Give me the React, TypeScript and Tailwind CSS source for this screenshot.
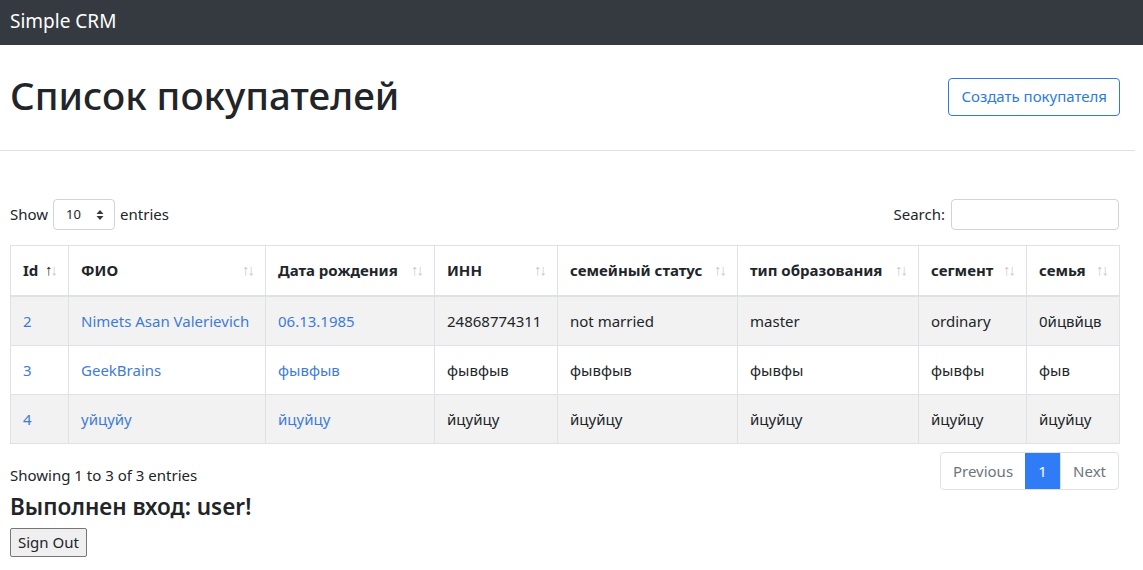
import React from "react"

const font = { fontFamily: '"Noto Sans", "Open Sans", Arial, sans-serif' }

const columns = [
  { title: "Id", w: "w-[58px]" },
  { title: "ФИО", w: "w-[197px]" },
  { title: "Дата рождения", w: "w-[169px]" },
  { title: "ИНН", w: "w-[123px]" },
  { title: "семейный статус", w: "w-[180px]" },
  { title: "тип образования", w: "w-[181px]" },
  { title: "сегмент", w: "w-[108px]" },
  { title: "семья", w: "w-[93px]" },
]

const rows = [
  ["2", "Nimets Asan Valerievich", "06.13.1985", "24868774311", "not married", "master", "ordinary", "0йцвйцв"],
  ["3", "GeekBrains", "фывфыв", "фывфыв", "фывфыв", "фывфы", "фывфы", "фыв"],
  ["4", "уйцуйу", "йцуйцу", "йцуйцу", "йцуйцу", "йцуйцу", "йцуйцу", "йцуйцу"],
]

function SortArrows({ active }: { active?: boolean }) {
  return (
    <span className="absolute right-[10px] top-1/2 -translate-y-[55%] flex text-[15px] leading-none font-normal">
      <span className={active ? "text-[#212529]" : "text-[#c8c9ca]"}>↑</span>
      <span className="text-[#c8c9ca] -ml-[2px]">↓</span>
    </span>
  )
}

export default function App() {
  return (
    <div className="min-h-screen bg-white text-[#212529] text-[15px]" style={font}>
      <nav className="h-[45px] bg-[#343a40] flex items-center px-[10px]">
        <span className="text-white text-[19px] leading-none -mt-[2px]">Simple CRM</span>
      </nav>

      <div className="mr-[8px] border-b border-[#dee2e6] flex items-center justify-between pl-[10px] pr-[15px] h-[106px]">
        <h1 className="text-[38.5px] font-medium leading-none -mt-[4px]">Список покупателей</h1>
        <button className="h-[38px] px-[12px] border border-[#2d7be0] rounded-[4px] text-[#2d7be0] text-[15px] -mt-[2px]">
          Создать покупателя
        </button>
      </div>

      <div className="px-[10px] pr-[24px] pt-[48px]">
        <div className="flex items-center justify-between h-[31px]">
          <div className="flex items-center gap-[5px]">
            <span>Show</span>
            <div className="h-[31px] w-[62px] border border-[#ced4da] rounded-[4px] flex items-center justify-between pl-[12px] pr-[10px]">
              <span className="text-[13px]">10</span>
              <svg width="8" height="12" viewBox="0 0 8 12">
                <path d="M4 1 L7.5 5 H0.5 Z M4 11 L7.5 7 H0.5 Z" fill="#343a40" />
              </svg>
            </div>
            <span>entries</span>
          </div>
          <div className="flex items-center gap-[6px]">
            <span>Search:</span>
            <div className="h-[31px] w-[168px] border border-[#ced4da] rounded-[4px]" />
          </div>
        </div>

        <table className="mt-[15px] w-[1109px] table-fixed border-collapse border border-[#dee2e6]">
          <thead>
            <tr className="h-[50px]">
              {columns.map((c, i) => (
                <th
                  key={c.title}
                  className={`${c.w} relative text-left font-bold text-[15px] px-[12px] border border-[#dee2e6] border-b-2 whitespace-nowrap`}
                >
                  {c.title}
                  <SortArrows active={i === 0} />
                </th>
              ))}
            </tr>
          </thead>
          <tbody>
            {rows.map((r, ri) => (
              <tr key={r[0]} className={`${ri === 0 ? "h-[50px]" : "h-[49px]"} ${ri % 2 === 0 ? "bg-[#f2f2f2]" : "bg-white"}`}>
                {r.map((cell, ci) => (
                  <td
                    key={ci}
                    className={`px-[12px] border border-[#dee2e6] whitespace-nowrap ${ci < 3 ? "text-[#3e7bd8]" : ""}`}
                  >
                    {cell}
                  </td>
                ))}
              </tr>
            ))}
          </tbody>
        </table>

        <div className="flex justify-between mt-[8px]">
          <div className="pt-[12px]">Showing 1 to 3 of 3 entries</div>
          <div className="flex h-[38px] border border-[#dee2e6] rounded-[4px] overflow-hidden">
            <span className="px-[12px] flex items-center text-[#6c757d]">Previous</span>
            <span className="w-[35px] flex items-center justify-center bg-[#2f7cf6] text-white">1</span>
            <span className="px-[12px] flex items-center text-[#6c757d] border-l border-[#dee2e6]">Next</span>
          </div>
        </div>

        <h3 className="text-[22.5px] font-semibold mt-[3px] leading-tight">Выполнен вход: user!</h3>
        <button className="mt-[7px] h-[29px] px-[7px] bg-[#efefef] border border-[#767676] rounded-[2px] text-[15px]">
          Sign Out
        </button>
      </div>
    </div>
  )
}
